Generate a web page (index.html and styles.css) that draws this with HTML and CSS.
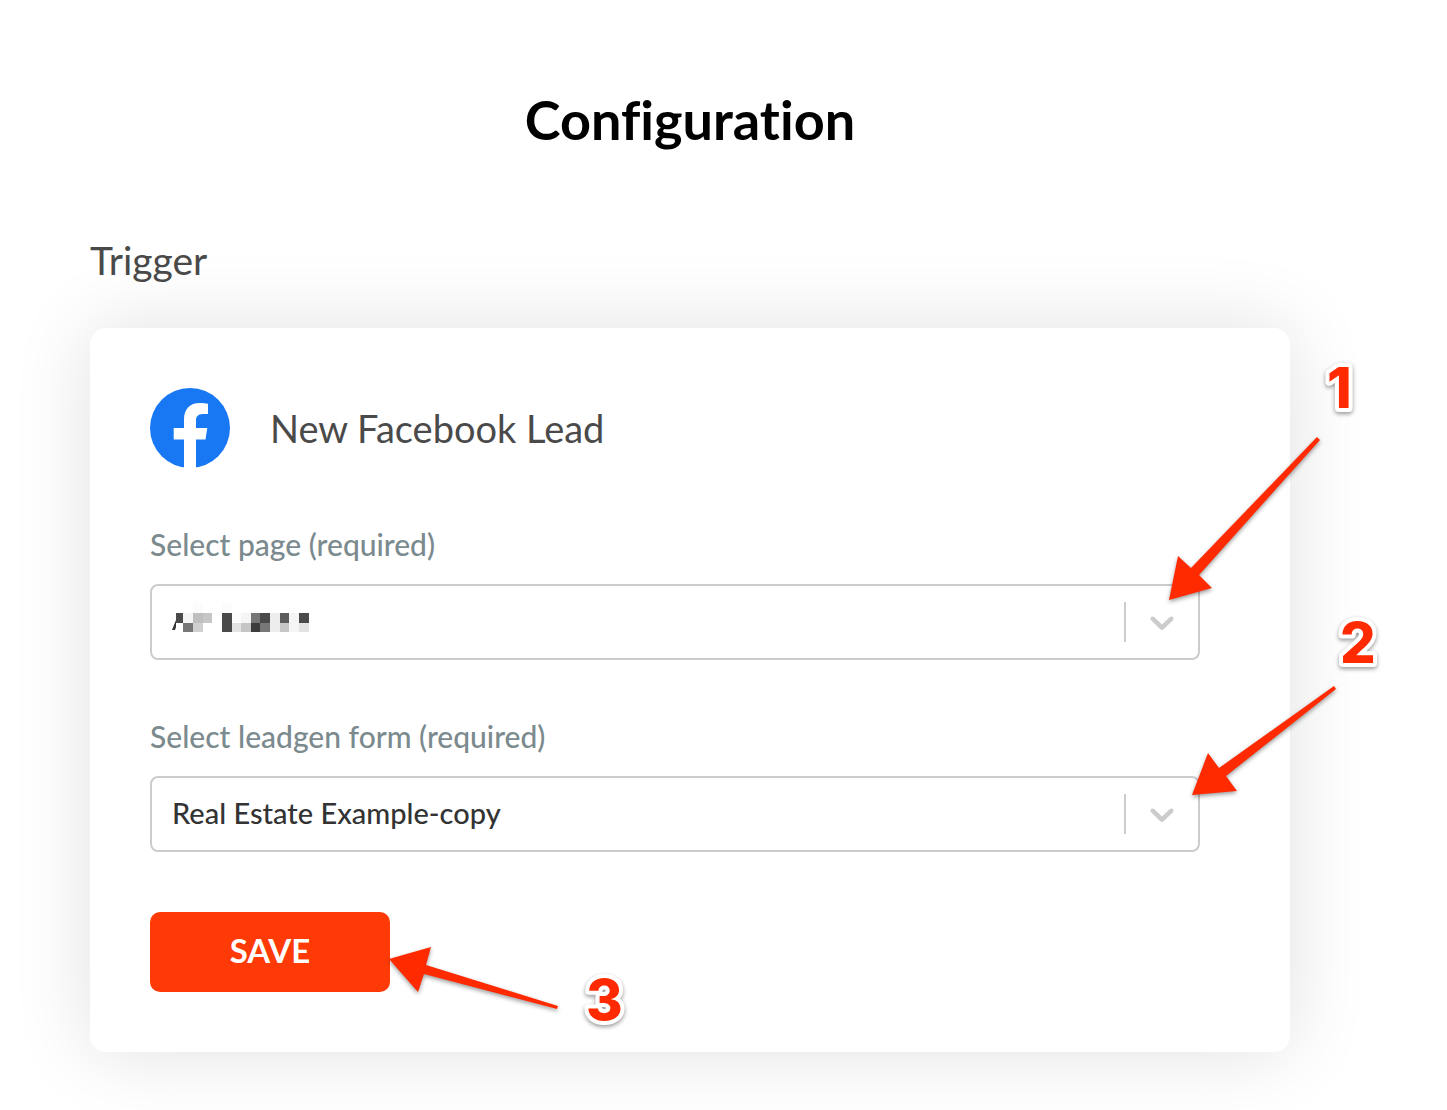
FILE: index.html
```html
<!DOCTYPE html>
<html lang="en">
<head>
  <meta charset="utf-8">
  <meta name="viewport" content="width=device-width,initial-scale=1">
  <title>Configuration</title>
  <link rel="stylesheet" href="styles.css">
</head>

<body>
  <main class="page">
    <h1>Configuration</h1>
    <h2>Trigger</h2>

    <form class="card">
      <div class="card-header">
        <svg class="logo" viewBox="0 0 80 80" aria-hidden="true">
          <circle cx="40" cy="40" r="40" fill="#1877f2"/>
          <path fill="#fff" d="M34 80V51.500H23.700V40H34V31.500C34 21 40 15 49.500 15C54 15 58 15.800 58 15.800V26H53C47.500 26 46 29 46 32.500V40H57.300L55.500 51.500H46V80Z"/>
        </svg>
        <h3>New Facebook Lead</h3>
      </div>

      <div class="field">
        <label for="page">Select page (required)</label>
        <div class="select-box">
          <select id="page">
            <option value="1" selected></option>
          </select>
          <!-- page name is hidden -->
          <svg class="redacted" viewBox="0 0 138 30" shape-rendering="crispEdges" aria-hidden="true">
            <path fill="#333" shape-rendering="auto" d="M0 27L4 17V24L3 27Z"/>
            <path fill="#fcfcfc" d="M21 0h10v10h-10zM50 0h10v10h-10zM60 10h9v10h-9z"/>
            <path fill="#f5f5f5" d="M11 10h10v10h-10zM69 10h10v10h-10zM117 10h10v19h-10z"/>
            <path fill="#4a4a4a" d="M4 10h7v10h-7zM50 10h10v19h-10zM88 10h10v10h-10zM127 10h10v10h-10z"/>
            <path fill="#bfbfbf" d="M21 10h10v10h-10z"/>
            <path fill="#c6c6c6" d="M31 10h9v10h-9zM69 20h10v9h-10zM108 20h9v9h-9z"/>
            <path fill="#777" d="M11 20h10v9h-10zM79 10h9v10h-9zM88 20h10v9h-10z"/>
            <path fill="#d0d0d0" d="M21 20h10v9h-10z"/>
            <path fill="#e3e3e3" d="M60 20h9v9h-9zM127 20h10v9h-10z"/>
            <path fill="#3c3c3c" d="M79 20h9v9h-9z"/>
            <path fill="#ededed" d="M98 10h10v19h-10z"/>
            <path fill="#5c5c5c" d="M108 10h9v10h-9z"/>
          </svg>
          <span class="indicator">
            <svg viewBox="0 0 20 20" aria-hidden="true"><path d="M4.516 7.548c0.436-0.446 1.043-0.481 1.576 0l3.908 3.747 3.908-3.747c0.533-0.481 1.141-0.446 1.574 0 0.436 0.445 0.408 1.197 0 1.615-0.406 0.418-4.695 4.502-4.695 4.502-0.217 0.223-0.502 0.335-0.787 0.335s-0.57-0.112-0.789-0.335c0 0-4.287-4.084-4.695-4.502s-0.436-1.170 0-1.615z"/></svg>
          </span>
        </div>
      </div>

      <div class="field">
        <label for="leadgen">Select leadgen form (required)</label>
        <div class="select-box">
          <select id="leadgen">
            <option selected>Real Estate Example-copy</option>
          </select>
          <span class="indicator">
            <svg viewBox="0 0 20 20" aria-hidden="true"><path d="M4.516 7.548c0.436-0.446 1.043-0.481 1.576 0l3.908 3.747 3.908-3.747c0.533-0.481 1.141-0.446 1.574 0 0.436 0.445 0.408 1.197 0 1.615-0.406 0.418-4.695 4.502-4.695 4.502-0.217 0.223-0.502 0.335-0.787 0.335s-0.57-0.112-0.789-0.335c0 0-4.287-4.084-4.695-4.502s-0.436-1.170 0-1.615z"/></svg>
          </span>
        </div>
      </div>

      <button class="save" type="button">SAVE</button>

      <!-- step markers -->
      <svg class="step step-page" viewBox="0 0 240 250">
        <path class="arrow" d="M9 240L18 196L31 208L157 77L160 80L39 215L52 228Z"/>
        <text x="167" y="48">1</text>
      </svg>
      <svg class="step step-form" viewBox="0 0 220 200">
        <path class="arrow" d="M12 185L28 143L39 158L154 76L156 79L46 166L57 181Z"/>
        <text x="160" y="53">2</text>
      </svg>
      <svg class="step step-save" viewBox="0 0 260 100">
        <path class="arrow" d="M9 19L51 7L46 25L178 66L177 69L44 34L38 52Z"/>
        <text x="206" y="80">3</text>
      </svg>
    </form>
  </main>
</body>
</html>
```
FILE: styles.css
```css
* {
  box-sizing: border-box;
}

body {
  margin: 0;
  font-family: Lato, "Noto Sans", sans-serif;
  font-variant-ligatures: none;
  color: #4a4a4a;
  background: #fff;
}

.page {
  padding: 84px 157px 58px 90px;
}

h1, h2, h3 {
  margin: 0;
}

h1 {
  color: #000;
  font-size: 54px;
  font-weight: 700;
  line-height: 72px;
  text-align: center;
}

h2 {
  margin-top: 80px;
  font-size: 39px;
  font-weight: 400;
  line-height: 48px;
}

h3 {
  font-size: 38px;
  font-weight: 400;
  line-height: 48px;
}

.card {
  position: relative;
  margin-top: 44px;
  padding: 60px;
  border-radius: 16px;
  background: #fff;
  box-shadow: 0 0 80px rgba(0, 0, 0, 0.12);
}

.card-header {
  display: flex;
  align-items: center;
  gap: 40px;
}

.logo {
  width: 80px;
  height: 80px;
}

.field {
  margin: 56px 30px 0 0;
}

.field label {
  display: block;
  margin-bottom: 20px;
  color: #7b8a8e;
  font-size: 30px;
  font-weight: 500;
  line-height: 40px;
}

.select-box {
  position: relative;
}

select {
  display: block;
  width: 100%;
  height: 76px;
  padding: 0 80px 4px 20px;
  border: 2px solid #ccc;
  border-radius: 8px;
  color: #333;
  background: #fff;
  font-family: inherit;
  font-size: 29px;
  font-weight: 500;
  appearance: none;
}

.redacted {
  position: absolute;
  top: 19px;
  left: 22px;
  width: 138px;
  height: 30px;
  pointer-events: none;
}

.indicator {
  position: absolute;
  top: 18px;
  right: 2px;
  padding: 0 16px;
  border-left: 2px solid #ccc;
  pointer-events: none;
}

.indicator svg {
  display: block;
  width: 40px;
  height: 40px;
  fill: #ccc;
}

.save {
  display: block;
  width: 240px;
  height: 80px;
  margin-top: 60px;
  padding: 0 0 4px;
  border: 0;
  border-radius: 10px;
  color: #fff;
  background: #ff3a06;
  font-family: inherit;
  font-size: 33px;
  font-weight: 700;
  cursor: pointer;
}

.step {
  position: absolute;
  overflow: visible;
  fill: #ff2a00;
  pointer-events: none;
}

.step text {
  font-family: Inter, "Liberation Sans", sans-serif;
  font-size: 56px;
  font-weight: 800;
  stroke: #fff;
  stroke-width: 8px;
  stroke-linejoin: round;
  paint-order: stroke;
  filter: drop-shadow(0 2px 2px rgba(0, 0, 0, 0.4));
}

.arrow {
  filter: drop-shadow(0 2px 2px rgba(0, 0, 0, 0.4));
}

.step-page {
  top: 32px;
  right: -110px;
  width: 240px;
  height: 250px;
}

.step-form {
  top: 282px;
  right: -110px;
  width: 220px;
  height: 200px;
}

.step-save {
  top: 612px;
  left: 290px;
  width: 260px;
  height: 100px;
}
```
